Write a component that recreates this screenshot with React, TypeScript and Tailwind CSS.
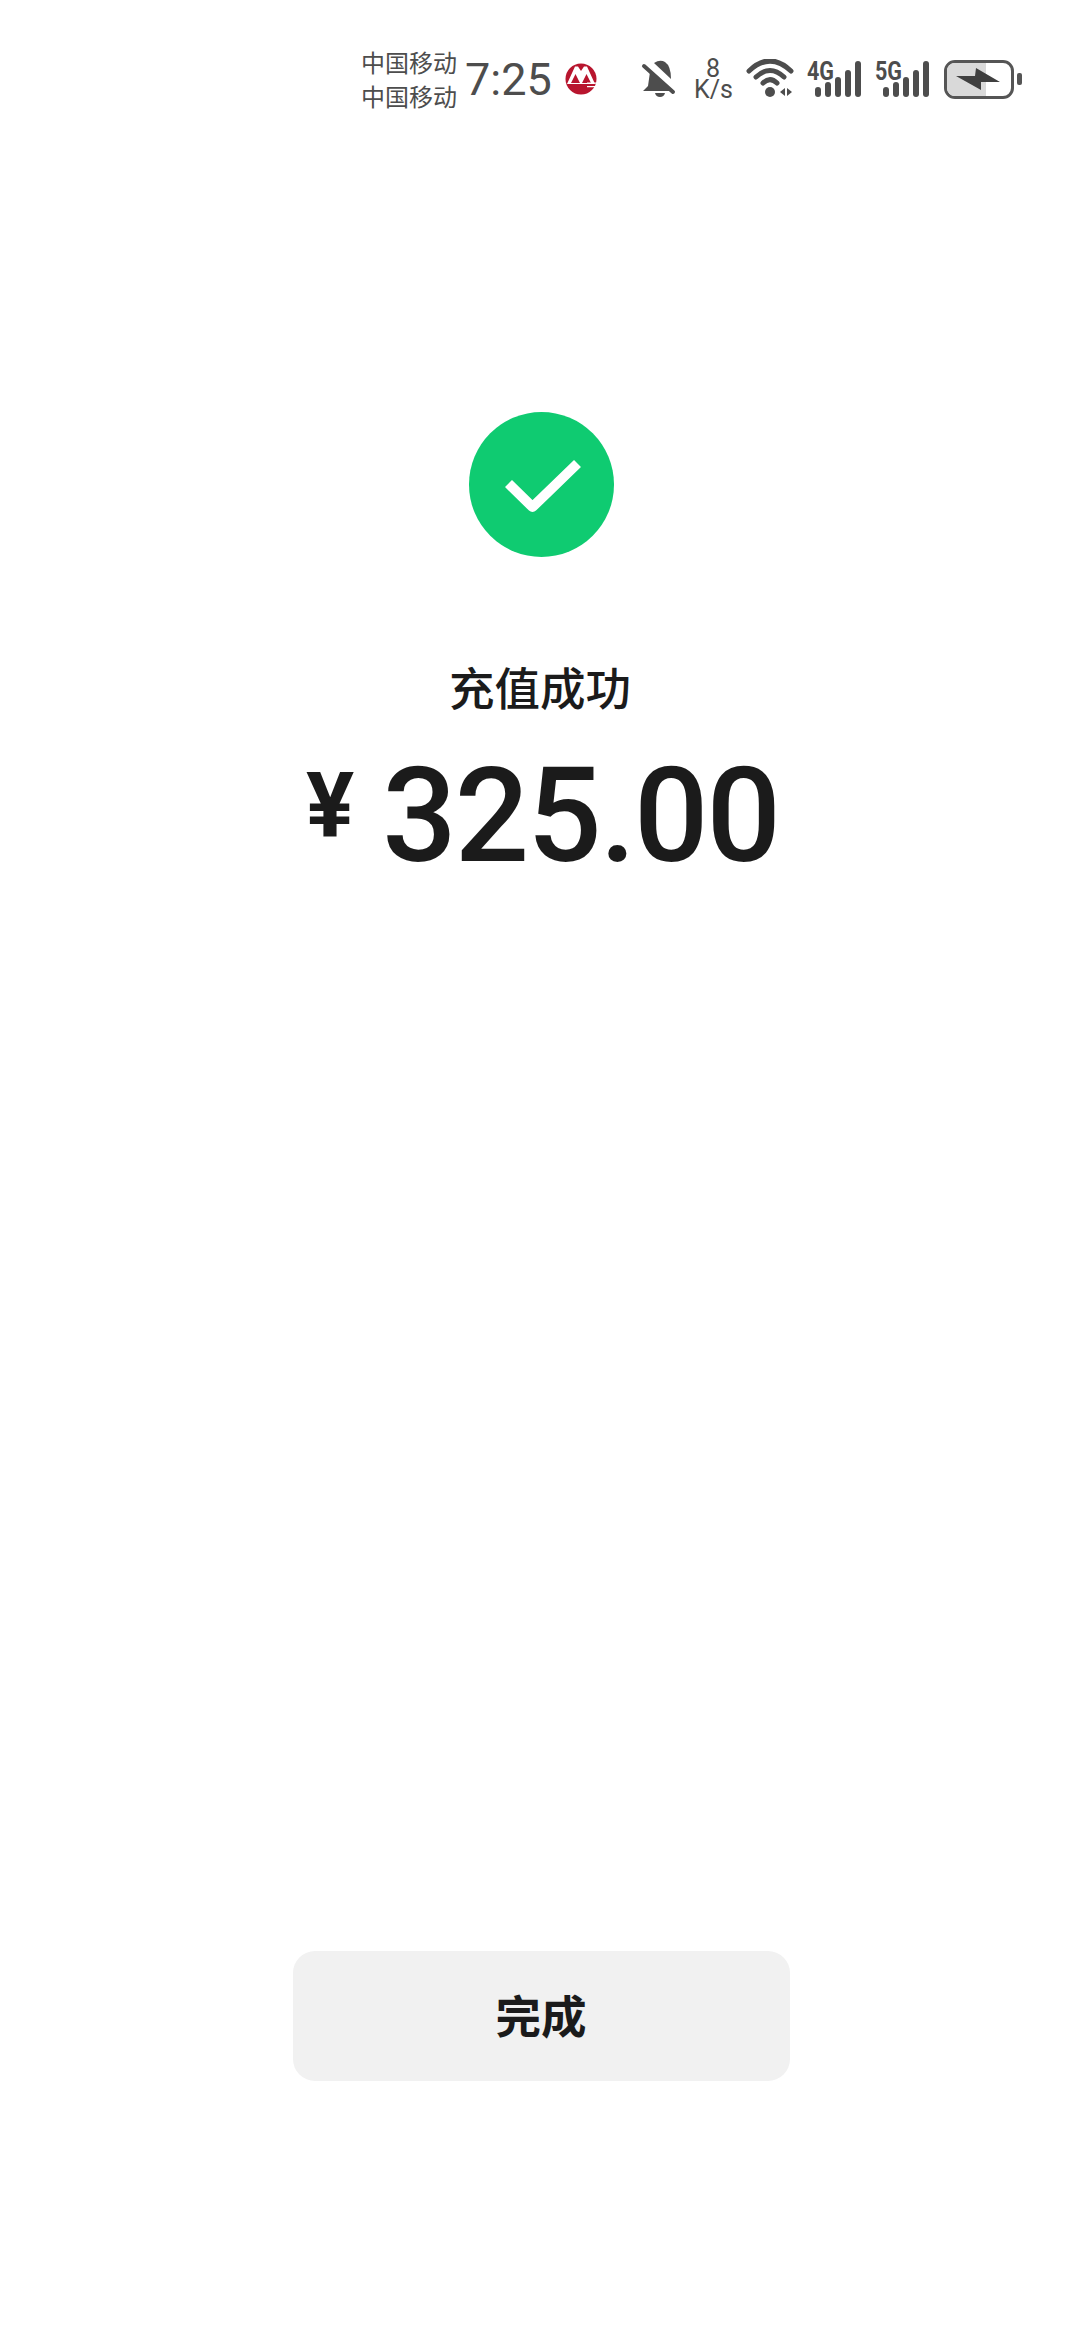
import React from 'react';

const SignalIcon = ({ label }: { label: string }) => (
  <svg width="56" height="40" viewBox="0 0 56 40" className="shrink-0 overflow-visible text-[#4d4d4d] fill-current">
    <text x="0" y="21" textLength="27" lengthAdjust="spacingAndGlyphs" className="font-['Roboto'] text-[25px] font-bold">{label}</text>
    <rect x="8" y="28" width="6" height="10" rx="3" />
    <rect x="18" y="23" width="6" height="15" rx="3" />
    <rect x="28" y="18" width="6" height="20" rx="3" />
    <rect x="38" y="11" width="6" height="27" rx="3" />
    <rect x="48" y="2" width="6" height="36" rx="3" />
  </svg>
);

const StatusBar = () => (
  <div className="flex h-[158px] items-center pl-[361px] text-[#4d4d4d]">
    <div className="w-[94px] whitespace-nowrap text-[24px] leading-[34px] font-['Noto_Sans_CJK_SC',sans-serif]">
      <div>中国移动</div>
      <div>中国移动</div>
    </div>
    <div className="ml-[10px] w-[86px] text-[45px] leading-none font-['Roboto',sans-serif]">7:25</div>
    {/* bank logo */}
    <svg width="32" height="32" viewBox="0 0 32 32" className="ml-[14px] shrink-0">
      <circle cx="16" cy="16" r="15.5" fill="#b8152e" />
      <path d="M2 21 L10 3.5 H13 L16 8 L19 3.5 H22 L30 21 Z" fill="#fff" />
      <path d="M6 20 L10.5 11 L15 20 Z M17 20 L21.5 11 L26 20 Z" fill="#b8152e" />
      <path d="M22 23 H32 V24.2 H22 Z M22 19.5 H32 V20.7 H22 Z" fill="#fff" />
    </svg>
    <svg width="40" height="40" viewBox="0 0 40 40" className="ml-[43px] shrink-0 fill-current">
      <path d="M10 13 L28 28 L31 32 H3 L8 27 Z" />
      <path d="M14 4 Q20 0 25 3 Q31 7 31 20 Z" />
      <path d="M15 34 H25 Q24 38 20 38 Q16 38 15 34 Z" />
      <path d="M4 7 L33 33" stroke="currentColor" strokeWidth="4" strokeLinecap="round" />
    </svg>
    <div className="ml-[14px] w-[38px] text-center font-['Roboto',sans-serif] text-[25px] leading-[21px]">
      <div>8</div>
      <div>K/s</div>
    </div>
    <svg width="50" height="40" viewBox="0 0 50 40" className="ml-[14px] shrink-0">
      <g fill="none" stroke="#4d4d4d" strokeWidth="5" strokeLinecap="round">
        <path d="M3 12 Q24 -8 45 12" />
        <path d="M10 18 Q24 5 38 18" />
        <path d="M17 24 Q24 17 31 24" />
      </g>
      <circle cx="24" cy="33" r="5" fill="#4d4d4d" />
      <path d="M39 29 V37 L34 33 Z M41 29 V37 L46 33 Z" fill="#4d4d4d" />
    </svg>
    <div className="ml-[11px]"><SignalIcon label="4G" /></div>
    <div className="ml-[12px]"><SignalIcon label="5G" /></div>
    <div className="ml-[13px] flex items-center gap-[3px]">
      <div className="relative h-[39px] w-[70px] overflow-hidden rounded-[11px] border-[3px] border-[#555]">
        <div className="absolute inset-y-0 left-0 w-[39px] bg-[#d9d9d9]" />
        <svg width="64" height="33" viewBox="0 0 64 33" className="absolute inset-0">
          <path d="M9 13 L28 13 L29 5 L53 19 L34 19 L34 27 Z" fill="#3f3f3f" />
        </svg>
      </div>
      <div className="h-[12px] w-[5px] rounded-[2px] bg-[#555]" />
    </div>
  </div>
);

export default function App() {
  return (
    <div className="flex h-[2340px] w-[1080px] flex-col bg-white">
      <StatusBar />
      <div className="flex flex-1 flex-col items-center pt-[254px] text-[#1b1b1b]">
        <div className="ml-[2px] flex size-[145px] items-center justify-center rounded-full bg-[#0fcb71]">
          <svg width="80" height="60" viewBox="0 0 80 60" fill="none">
            <path d="M7.5 28.5 L31.5 52 L76.5 8.5" stroke="#fff" strokeWidth="10" strokeLinejoin="round" />
          </svg>
        </div>
        <div className="mt-[99px] text-[45.5px] leading-[60px] font-medium font-['Noto_Sans_CJK_SC',sans-serif]">充值成功</div>
        <div className="mt-[35px] ml-[5px] flex items-start font-['Roboto',sans-serif] leading-none">
          <span className="mr-[28px] mt-[6px] text-[90px] leading-[100px] font-bold">¥</span>
          <span className="text-[131px] leading-[131px] font-medium tracking-[-2px]">325.00</span>
        </div>
        <button className="mt-auto mb-[259px] ml-[2px] flex h-[130px] w-[497px] items-center justify-center rounded-[22px] bg-[#f1f1f1] pb-[4px] text-[45.5px] font-bold text-[#1b1b1b] font-['Noto_Sans_CJK_SC',sans-serif]">
          完成
        </button>
      </div>
    </div>
  );
}
